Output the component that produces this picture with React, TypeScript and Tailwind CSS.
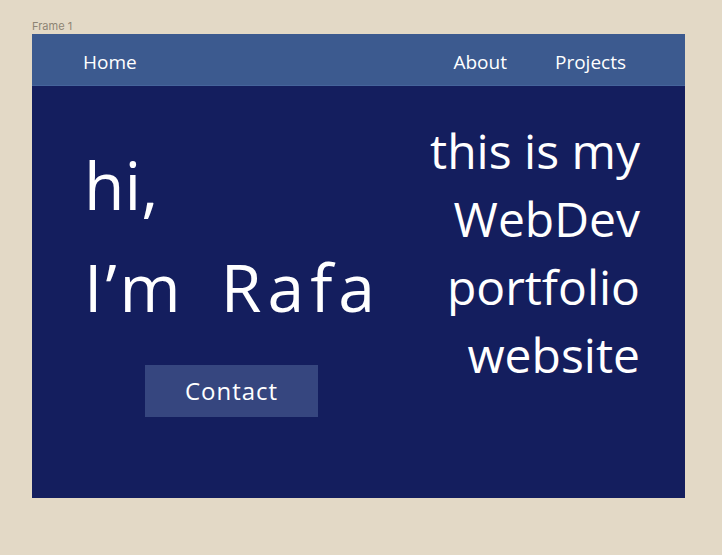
import React from "react";

export default function App() {
  const font = { fontFamily: '"Open Sans", "Noto Sans", sans-serif' };
  return (
    <div className="w-[722px] h-[555px] bg-[#e3d9c6] pl-8 pt-[18px]" style={font}>
      <div className="text-[11px] leading-[16px] text-[#8d8474] h-4" style={{ fontFamily: '"Inter", sans-serif' }}>
        Frame 1
      </div>
      <div className="w-[653px] h-[464px] bg-[#141e5e] flex flex-col">
        <header className="h-[52px] bg-[#3c5a8f] border-b border-[#45649b] flex items-center text-white text-[19px] pl-[51px] pr-[59px] pt-[5px]">
          <span>Home</span>
          <span className="ml-auto">About</span>
          <span className="ml-[48px]">Projects</span>
        </header>
        <main className="flex flex-1 text-white">
          <div className="pl-[52px] pt-[47px] flex flex-col">
            <div className="text-[66px] leading-[102px]">hi,</div>
            <div className="text-[66px] leading-[102px] flex">
              <span className="tracking-[3px]">I’m</span>
              <span className="ml-[37px] tracking-[6px]">Rafa</span>
            </div>
            <button className="mt-[28px] ml-[61px] w-[173px] h-[52px] bg-[#36467f] text-[24px] tracking-[1px] text-white flex items-center justify-center">
              Contact
            </button>
          </div>
          <div className="ml-auto pr-[45px] pt-[31px] text-right text-[48px] leading-[68px]">
            <div>this is my</div>
            <div>WebDev</div>
            <div>portfolio</div>
            <div>website</div>
          </div>
        </main>
      </div>
    </div>
  );
}
